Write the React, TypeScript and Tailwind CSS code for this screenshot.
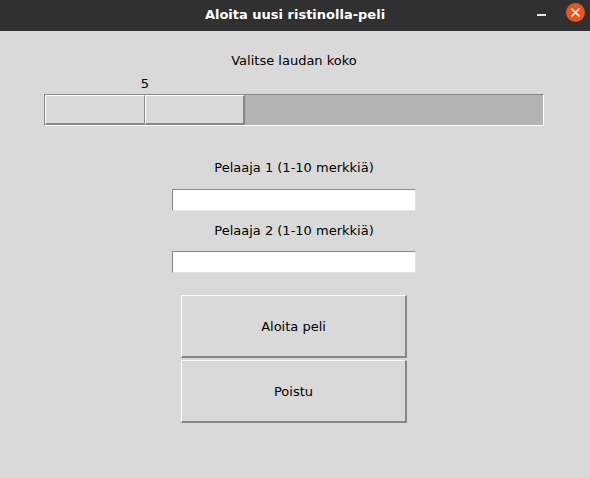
import React from "react";

const font = { fontFamily: '"DejaVu Sans", "Liberation Sans", sans-serif' };

export default function App() {
  return (
    <div className="w-[590px] h-[478px] bg-[#d9d9d9] flex flex-col overflow-hidden" style={font}>
      {/* Title bar */}
      <div className="relative h-[31px] bg-[#303030] flex items-center justify-center shrink-0">
        <span className="text-white font-bold text-[13px] leading-none -mt-[3px]">
          Aloita uusi ristinolla-peli
        </span>
        <div className="absolute left-[537px] top-[14px] w-[9px] h-[2px] bg-[#e6e6e6]" />
        <div className="absolute left-[566px] top-[3px] w-[19px] h-[19px] rounded-full bg-[#e95420] flex items-center justify-center">
          <svg width="9" height="9" viewBox="0 0 9 9">
            <path d="M1 1 L8 8 M8 1 L1 8" stroke="white" strokeWidth="1.6" strokeLinecap="round" />
          </svg>
        </div>
      </div>

      {/* Content */}
      <div className="w-[588px] flex flex-col items-center text-[13px] leading-[17px] text-black">
        <div className="mt-[21px] h-[17px]">Valitse laudan koko</div>

        <div className="w-[500px] mt-[6px] h-[17px] flex">
          <div className="w-[202px] text-center">5</div>
        </div>

        {/* Scale */}
        <div className="mt-[2px] w-[500px] h-[32px] border-t border-l border-t-[#878787] border-l-[#878787] border-b border-r border-b-white border-r-white bg-[#b3b3b3] flex">
          <div className="w-[100px] h-full bg-[#d9d9d9] border-t border-l border-t-white border-l-white border-b-2 border-r border-b-[#878787] border-r-[#878787]" />
          <div className="w-[100px] h-full bg-[#d9d9d9] border-t border-l border-t-white border-l-white border-b-2 border-r-2 border-b-[#878787] border-r-[#878787]" />
        </div>

        <div className="mt-[33px] h-[17px]">Pelaaja 1 (1-10 merkkiä)</div>
        <div className="mt-[13px] w-[244px] h-[22px] bg-white border-t border-l border-t-[#8a8a8a] border-l-[#8a8a8a] border-b border-r border-b-[#e3e3e3] border-r-[#e3e3e3]" />

        <div className="mt-[11px] h-[17px]">Pelaaja 2 (1-10 merkkiä)</div>
        <div className="mt-[12px] w-[244px] h-[22px] bg-white border-t border-l border-t-[#8a8a8a] border-l-[#8a8a8a] border-b border-r border-b-[#e3e3e3] border-r-[#e3e3e3]" />

        <button className="mt-[22px] w-[226px] h-[63px] bg-[#d9d9d9] border-t border-l border-t-white border-l-white border-b-2 border-r-2 border-b-[#868686] border-r-[#868686] flex items-center justify-center">
          Aloita peli
        </button>
        <button className="mt-[2px] w-[226px] h-[63px] bg-[#d9d9d9] border-t border-l border-t-white border-l-white border-b-2 border-r-2 border-b-[#868686] border-r-[#868686] flex items-center justify-center">
          Poistu
        </button>
      </div>
    </div>
  );
}
